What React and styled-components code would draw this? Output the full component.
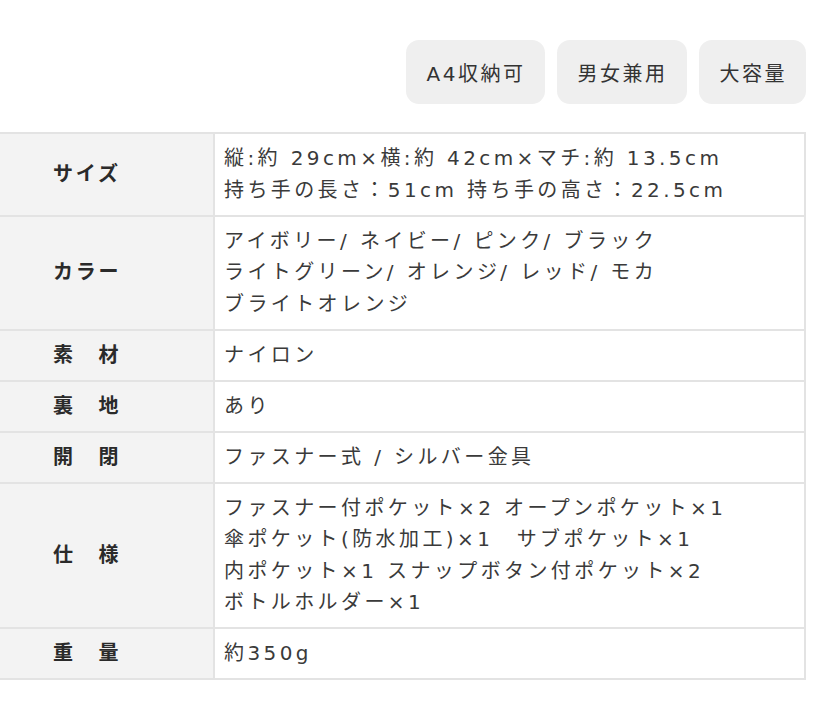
import React from 'react';
import styled, { createGlobalStyle } from 'styled-components';

const GlobalStyle = createGlobalStyle`
  body {
    margin: 0;
    background: #fff;
    font-family: 'DejaVu Sans', 'Noto Sans CJK JP', sans-serif;
    color: #3a3a3a;
  }
`;

const tags = ['A4収納可', '男女兼用', '大容量'];

const specs = [
  { label: 'サイズ', lines: ['縦:約 29cm×横:約 42cm×マチ:約 13.5cm', '持ち手の長さ：51cm 持ち手の高さ：22.5cm'] },
  { label: 'カラー', lines: ['アイボリー/ ネイビー/ ピンク/ ブラック', 'ライトグリーン/ オレンジ/ レッド/ モカ', 'ブライトオレンジ'] },
  { label: '素　材', lines: ['ナイロン'] },
  { label: '裏　地', lines: ['あり'] },
  { label: '開　閉', lines: ['ファスナー式 / シルバー金具'] },
  {
    label: '仕　様',
    lines: [
      'ファスナー付ポケット×2 オープンポケット×1',
      '傘ポケット(防水加工)×1　サブポケット×1',
      '内ポケット×1 スナップボタン付ポケット×2',
      'ボトルホルダー×1',
    ],
  },
  { label: '重　量', lines: ['約350g'] },
];

export default function App() {
  return (
    <>
      <GlobalStyle />
      <Wrap>
        <TagRow>
          {tags.map((t) => (
            <Tag key={t}>{t}</Tag>
          ))}
        </TagRow>
        <SpecTable>
          <tbody>
            {specs.map((s) => (
              <tr key={s.label}>
                <Label>{s.label}</Label>
                <Value>
                  {s.lines.map((l, i) => (
                    <div key={i}>{l}</div>
                  ))}
                </Value>
              </tr>
            ))}
          </tbody>
        </SpecTable>
      </Wrap>
    </>
  );
}

const Wrap = styled.div`
  width: 806px;
  padding-top: 40px;
`;

const TagRow = styled.div`
  display: flex;
  justify-content: flex-end;
  gap: 12px;
  margin-bottom: 28px;
`;

const Tag = styled.span`
  display: flex;
  align-items: center;
  height: 64px;
  padding: 0 19px 0 21px;
  border-radius: 13px;
  background: #efefef;
  font-size: 20px;
  letter-spacing: 2.5px;
  color: #333;
`;

const SpecTable = styled.table`
  width: 100%;
  border-collapse: collapse;
  font-size: 20px;
  line-height: 31.5px;
  tr {
    border-top: 2px solid #e3e3e3;
    border-bottom: 2px solid #e3e3e3;
  }
`;

const Label = styled.th`
  width: 214px;
  box-sizing: border-box;
  padding: 9px 0 8.5px 53px;
  background: #f3f3f3;
  text-align: left;
  font-weight: bold;
  letter-spacing: 2.8px;
  color: #2a2a2a;
  border-right: 2px solid #e3e3e3;
`;

const Value = styled.td`
  padding: 9px 10px 8.5px 9px;
  border-right: 2px solid #e3e3e3;
  letter-spacing: 3.4px;
  white-space: nowrap;
  background: #fff;
`;
